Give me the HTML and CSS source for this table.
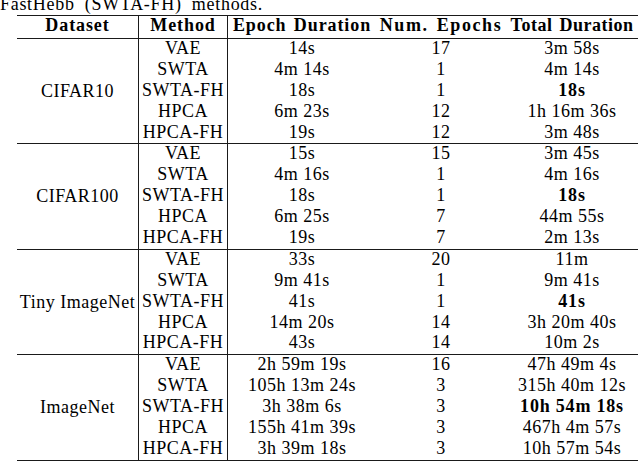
FILE: index.html
```html
<!DOCTYPE html>
<html>
<head>
<meta charset="utf-8">
<link rel="stylesheet" href="styles.css">
</head>
<body>
<p class="caption">FastHebb (SWTA-FH) methods.</p>
<table class="results">
  <colgroup>
    <col class="c-data"><col class="c-method"><col class="c-epoch"><col class="c-num"><col class="c-total">
  </colgroup>
  <thead>
    <tr><th class="ds">Dataset</th><th class="me">Method</th><th class="h-epoch">Epoch Duration</th><th class="h-num">Num. Epochs</th><th class="h-total">Total Duration</th></tr>
  </thead>
  <tbody>
    <tr class="first"><td class="ds" rowspan="5">CIFAR10</td><td class="me">VAE</td><td>14s</td><td>17</td><td>3m 58s</td></tr>
    <tr><td class="me">SWTA</td><td>4m 14s</td><td>1</td><td>4m 14s</td></tr>
    <tr><td class="me">SWTA-FH</td><td>18s</td><td>1</td><td class="best">18s</td></tr>
    <tr><td class="me">HPCA</td><td>6m 23s</td><td>12</td><td>1h 16m 36s</td></tr>
    <tr><td class="me">HPCA-FH</td><td>19s</td><td>12</td><td>3m 48s</td></tr>

    <tr class="first group"><td class="ds" rowspan="5">CIFAR100</td><td class="me">VAE</td><td>15s</td><td>15</td><td>3m 45s</td></tr>
    <tr><td class="me">SWTA</td><td>4m 16s</td><td>1</td><td>4m 16s</td></tr>
    <tr><td class="me">SWTA-FH</td><td>18s</td><td>1</td><td class="best">18s</td></tr>
    <tr><td class="me">HPCA</td><td>6m 25s</td><td>7</td><td>44m 55s</td></tr>
    <tr><td class="me">HPCA-FH</td><td>19s</td><td>7</td><td>2m 13s</td></tr>

    <tr class="first group"><td class="ds" rowspan="5">Tiny ImageNet</td><td class="me">VAE</td><td>33s</td><td>20</td><td>11m</td></tr>
    <tr><td class="me">SWTA</td><td>9m 41s</td><td>1</td><td>9m 41s</td></tr>
    <tr><td class="me">SWTA-FH</td><td>41s</td><td>1</td><td class="best">41s</td></tr>
    <tr><td class="me">HPCA</td><td>14m 20s</td><td>14</td><td>3h 20m 40s</td></tr>
    <tr><td class="me">HPCA-FH</td><td>43s</td><td>14</td><td>10m 2s</td></tr>

    <tr class="first group"><td class="ds" rowspan="5">ImageNet</td><td class="me">VAE</td><td>2h 59m 19s</td><td>16</td><td>47h 49m 4s</td></tr>
    <tr><td class="me">SWTA</td><td>105h 13m 24s</td><td>3</td><td>315h 40m 12s</td></tr>
    <tr><td class="me">SWTA-FH</td><td>3h 38m 6s</td><td>3</td><td class="best">10h 54m 18s</td></tr>
    <tr><td class="me">HPCA</td><td>155h 41m 39s</td><td>3</td><td>467h 4m 57s</td></tr>
    <tr><td class="me">HPCA-FH</td><td>3h 39m 18s</td><td>3</td><td>10h 57m 54s</td></tr>
  </tbody>
</table>
</body>
</html>
```

FILE: styles.css
```css
html, body {
  margin: 0;
  padding: 0;
  background: #ffffff;
}

body {
  font-family: "Liberation Serif", "Times New Roman", serif;
  font-size: 18px;
  color: #000;
  letter-spacing: 0.5px;
}

.caption {
  margin: -5px 0 0 0;
  height: 20px;
  line-height: 18px;
  word-spacing: 5px;
  letter-spacing: 0.7px;
  white-space: nowrap;
}

.results {
  margin-left: 17px;
  width: 621px;
  table-layout: fixed;
  border-collapse: separate;
  border-spacing: 0;
  border-top: 1.5px solid #1a1a1a;
  border-bottom: 1.5px solid #1a1a1a;
}

.c-data { width: 122px; }
.c-method { width: 89px; }
.c-epoch { width: 148px; }
.c-num { width: 130px; }
.c-total { width: 132px; }

.results th,
.results td {
  padding: 0;
  text-align: center;
  vertical-align: top;
  white-space: nowrap;
  line-height: 19px;
}

.results th {
  height: 22px;
  font-weight: bold;
  letter-spacing: 0.9px;
  word-spacing: 2px;
  border-bottom: 1px solid #1a1a1a;
  line-height: 19px;
}

.results th.h-num {
  letter-spacing: 1.6px;
}

.results th.h-total {
  letter-spacing: 0.5px;
}

.results td {
  height: 20.9px;
}

.results .ds {
  border-right: 1px solid #1a1a1a;
}

.results .me {
  border-right: 1px solid #1a1a1a;
}

.results td.ds {
  vertical-align: middle;
}

.results tr.group td {
  border-top: 1px solid #1a1a1a;
}

.results .best {
  font-weight: bold;
  letter-spacing: 0.8px;
}
```
